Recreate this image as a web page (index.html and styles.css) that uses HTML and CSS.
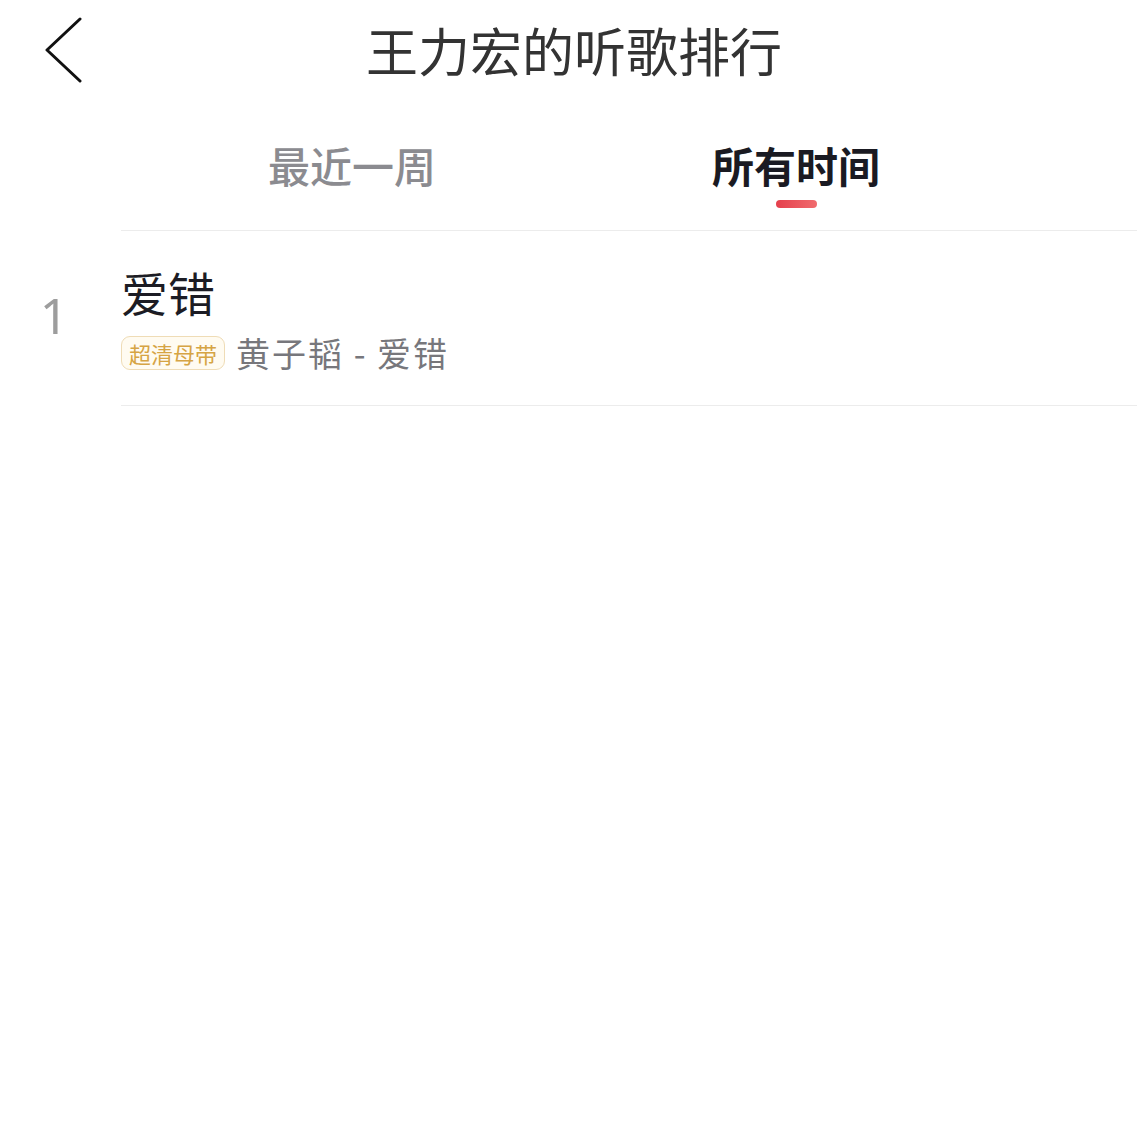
FILE: index.html
```html
<!DOCTYPE html>
<html>
<head>
    <meta charset="utf-8">
    <meta name="viewport" content="width=device-width, initial-scale=1">
    <title>王力宏的听歌排行</title>
    <link rel="stylesheet" href="styles.css">
</head>

<body>
    <header class="topbar">
        <a class="back" href="#">
            <svg width="40" height="66" viewBox="0 0 40 66">
                <polyline points="36,2 3,33 36,64" fill="none" stroke="#111" stroke-width="3" stroke-linecap="round" stroke-linejoin="round"/>
            </svg>
        </a>
        <h1 class="title">王力宏的听歌排行</h1>
    </header>

    <nav class="tabs">
        <div class="tab">
            <span class="tab-label">最近一周</span>
        </div>
        <div class="tab active">
            <span class="tab-label">所有时间</span>
            <span class="tab-bar"></span>
        </div>
    </nav>

    <ul class="songs">
        <li class="song">
            <div class="rank">1</div>
            <div class="info">
                <div class="name">爱错</div>
                <div class="meta">
                    <span class="tag">超清母带</span>
                    <span class="artist">黄子韬 - 爱错</span>
                </div>
            </div>
        </li>
    </ul>
</body>
</html>
```

FILE: styles.css
```css
body{
    margin: 0;
    padding: 0;
    background-color: #fff;
    font-family: "Noto Sans CJK SC", "Noto Sans", sans-serif;}

.topbar{
    height: 100px;
    display: flex;
    align-items: center;
    padding: 0 79px 0 40px;}

.back{
    width: 50px;
    display: flex;
    align-items: center;
    padding-left: 4px;
    box-sizing: border-box;}

.back svg{ display: block; }

.title{
    flex: 1;
    margin: 0;
    text-align: center;
    font-size: 52px;
    line-height: 60px;
    font-weight: 400;
    color: #333;}

/* 탭 영역 */
.tabs{
    display: flex;
    margin-left: 121px;
    padding-left: 9px;
    border-bottom: 1px solid #ececec;}

.tab{
    width: 444px;
    display: flex;
    flex-direction: column;
    align-items: center;
    padding: 40px 0 22px;}

.tab-label{
    font-size: 42px;
    line-height: 50px;
    font-weight: 500;
    color: #8b8b90;}

.tab.active .tab-label{
    color: #1a1a22;
    font-weight: 700;}

.tab-bar{
    display: block;
    width: 41px;
    height: 8px;
    margin-top: 10px;
    border-radius: 4px;
    background: linear-gradient(90deg, #e5404c, #f06b6e);}

.tab:not(.active){ padding-bottom: 40px; }

/* 노래 목록 */
.songs{
    list-style: none;
    margin: 0;
    padding: 0;}

.song{
    display: flex;
    align-items: center;}

.rank{
    width: 108px;
    margin-right: 13px;
    margin-bottom: 8px;
    text-align: center;
    font-family: "Noto Sans", "Open Sans", sans-serif;
    font-size: 50px;
    line-height: 60px;
    color: #9d9d9d;}

.info{
    flex: 1;
    padding: 33px 0 32px;
    border-bottom: 1px solid #ececec;}

.name{
    font-size: 47px;
    line-height: 56px;
    color: #1c1c24;}

.meta{
    display: flex;
    align-items: center;
    margin-top: 13px;}

.tag{
    height: 34px;
    padding: 0 7px;
    border: 1px solid #efdcb6;
    border-radius: 9px;
    background-color: #fffbf1;
    color: #d6a444;
    font-size: 22px;
    line-height: 34px;
    box-sizing: border-box;
    display: inline-flex;
    align-items: center;}

.artist{
    margin-left: 11px;
    font-size: 34px;
    line-height: 40px;
    letter-spacing: 2px;
    color: #77777c;}
```
